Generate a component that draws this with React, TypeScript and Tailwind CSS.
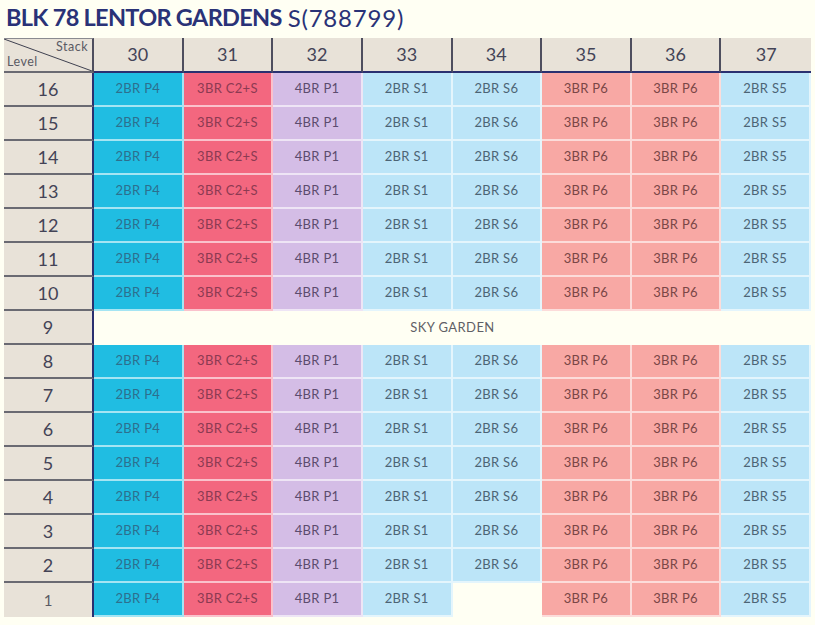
import React from "react";

type Unit = { label: string; bg: string; fg: string };

const U: Record<string, Unit> = {
  p4: { label: "2BR P4", bg: "bg-[#20bde2]", fg: "text-[#2d6f8e]" },
  c2: { label: "3BR C2+S", bg: "bg-[#f3677f]", fg: "text-[#8c3a52]" },
  p1: { label: "4BR P1", bg: "bg-[#d4bde6]", fg: "text-[#5c4c6e]" },
  s1: { label: "2BR S1", bg: "bg-[#bce5f8]", fg: "text-[#4c6475]" },
  s6: { label: "2BR S6", bg: "bg-[#bce5f8]", fg: "text-[#4c6475]" },
  p6: { label: "3BR P6", bg: "bg-[#f8a8a4]", fg: "text-[#7a4646]" },
  s5: { label: "2BR S5", bg: "bg-[#bce5f8]", fg: "text-[#4c6475]" },
};

const stacks = ["30", "31", "32", "33", "34", "35", "36", "37"];
const normal = ["p4", "c2", "p1", "s1", "s6", "p6", "p6", "s5"];
const levels = [16, 15, 14, 13, 12, 11, 10, 9, 8, 7, 6, 5, 4, 3, 2, 1];

export default function App() {
  return (
    <div
      className="w-[815px] h-[625px] bg-[#fffff3] overflow-hidden"
      style={{ fontFamily: "Lato, 'Open Sans', sans-serif" }}
    >
      <div className="h-[38px] pl-[6px] flex items-center text-[#2a3277] leading-none pb-[2px]">
        <span className="font-bold text-[23.5px] tracking-[-0.7px]">BLK 78 LENTOR GARDENS</span>
        <span className="ml-[6px] font-normal text-[24px] tracking-[0.8px]">S(788799)</span>
      </div>
      <div className="ml-[4px] w-[807px] grid grid-cols-[90px_repeat(8,1fr)]">
        {/* corner */}
        <div className="relative h-[35px] bg-[#e8e2d8] border-t border-[#8a8a90] border-r-2 border-r-[#4e4e5e] border-b-2 border-b-[#6a6a72]">
          <svg className="absolute inset-0" width="88" height="32" viewBox="0 0 88 32" preserveAspectRatio="none">
            <line x1="0" y1="0" x2="88" y2="32" stroke="#3f4150" strokeWidth="1" />
          </svg>
          <span className="absolute right-[4px] top-[-1px] text-[12.5px] text-[#5a5a64] tracking-[0.5px]">Stack</span>
          <span className="absolute left-[3px] bottom-[-1px] text-[12.5px] text-[#5a5a64] tracking-[0.5px]">Level</span>
        </div>
        {stacks.map((s, i) => (
          <div
            key={s}
            className={`h-[35px] bg-[#e8e2d8] flex items-center justify-center text-[18px] text-[#434356] border-b-2 border-b-[#2a3070] ${i < 7 ? "border-r-2 border-r-[#4e4e5e]" : ""}`}
          >
            {s}
          </div>
        ))}
        {levels.map((lv) => (
          <React.Fragment key={lv}>
            <div
              className={`h-[34px] bg-[#e8e2d8] flex items-center justify-center text-[18px] text-[#434356] border-r-2 border-r-[#2a3070] ${lv !== 1 ? "border-b-2 border-b-[#6a6a72]" : ""}`}
            >
              <span className={lv === 1 ? "text-[15px] text-[#5a5a64]" : ""}>{lv}</span>
            </div>
            {lv === 9 ? (
              <div className="col-span-8 h-[34px] bg-[#fffff3] flex items-center justify-center text-[13px] text-[#5f5f66] tracking-[0.4px]">
                SKY GARDEN
              </div>
            ) : (
              normal.map((k, ci) => {
                if (lv === 1 && ci === 4) {
                  return <div key={ci} className="h-[34px] bg-[#fffff3]" />;
                }
                const u = U[k];
                return (
                  <div
                    key={ci}
                    className={`h-[34px] ${u.bg} ${u.fg} flex items-center justify-center text-[13px] tracking-[0.3px] border-b-2 border-r-2 border-white/60`}
                  >
                    {u.label}
                  </div>
                );
              })
            )}
          </React.Fragment>
        ))}
      </div>
    </div>
  );
}
